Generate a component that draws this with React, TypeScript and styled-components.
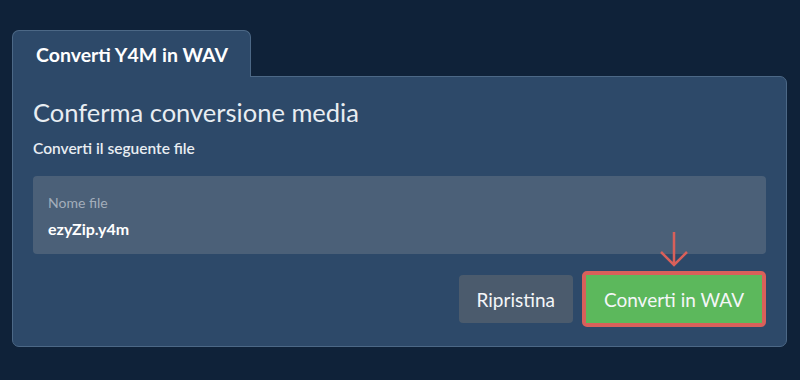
import styled, { createGlobalStyle } from "styled-components";

const GlobalStyle = createGlobalStyle`
body {
    margin: 0;
    background: #0f2239;
    font-family: Lato, "Open Sans", sans-serif;
}
`

export default function App() {
    return (
        <>
            <GlobalStyle />
            <Page>
                <Tab>Converti Y4M in WAV</Tab>
                <Panel>
                    <Heading>Conferma conversione media</Heading>
                    <Subtitle>Converti il seguente file</Subtitle>
                    <FileBox>
                        <FileLabel>Nome file</FileLabel>
                        <FileName>ezyZip.y4m</FileName>
                    </FileBox>
                    <Actions>
                        <Button>Ripristina</Button>
                        <ConvertWrap>
                            <Arrow width="30" height="36" viewBox="0 0 30 36">
                                <path d="M15 1 V34 M2 21 L15 34 L28 21" fill="none" stroke="#d9605a" strokeWidth="2.5" />
                            </Arrow>
                            <Button $primary>Converti in WAV</Button>
                        </ConvertWrap>
                    </Actions>
                </Panel>
            </Page>
        </>
    )
}

const Page = styled.div`
display: flex;
flex-direction: column;
align-items: flex-start;
padding: 30px 13px 0 12px;
`
const Tab = styled.div`
box-sizing: border-box;
height: 47px;
margin-bottom: -1px;
padding: 0 22px 0 23px;
display: flex;
align-items: center;
background: #2d4969;
border: 1px solid #4c6886;
border-bottom: none;
border-radius: 7px 7px 0 0;
color: #ffffff;
font-size: 19.5px;
font-weight: 700;
position: relative;
z-index: 1;
`
const Panel = styled.div`
box-sizing: border-box;
width: 100%;
padding: 17px 20px 19px 20px;
background: #2d4969;
border: 1px solid #4c6886;
border-radius: 0 7px 7px 7px;
display: flex;
flex-direction: column;
`
const Heading = styled.h2`
margin: 0;
font-size: 25.5px;
font-weight: 400;
line-height: 36px;
color: #e8edf2;
`
const Subtitle = styled.p`
margin: 8px 0 0 0;
font-size: 15.5px;
font-weight: 600;
line-height: 20px;
color: #e8edf2;
`
const FileBox = styled.div`
margin-top: 18px;
height: 78px;
box-sizing: border-box;
padding: 18px 15px 0 15px;
background: #4b6078;
border-radius: 4px;
display: flex;
flex-direction: column;
`
const FileLabel = styled.span`
font-size: 14px;
line-height: 18px;
color: #a3aebb;
`
const FileName = styled.span`
margin-top: 7px;
font-size: 16px;
font-weight: 700;
line-height: 20px;
color: #ffffff;
`
const Actions = styled.div`
margin-top: 17px;
display: flex;
justify-content: flex-end;
align-items: center;
gap: 9px;
`
const ConvertWrap = styled.div`
position: relative;
border: 4px solid #d9605a;
border-radius: 5px;
`
const Button = styled.button<{ $primary?: boolean }>`
height: 48px;
padding: 0 18px;
border: none;
border-radius: ${p => (p.$primary ? "0" : "4px")};
background: ${p => (p.$primary ? "#5cb85c" : "#4b5b6d")};
color: #f4f6f8;
font-family: Lato, "Open Sans", sans-serif;
font-size: 19px;
font-weight: 400;
display: block;
`
const Arrow = styled.svg`
position: absolute;
left: 73px;
top: -44px;
`
